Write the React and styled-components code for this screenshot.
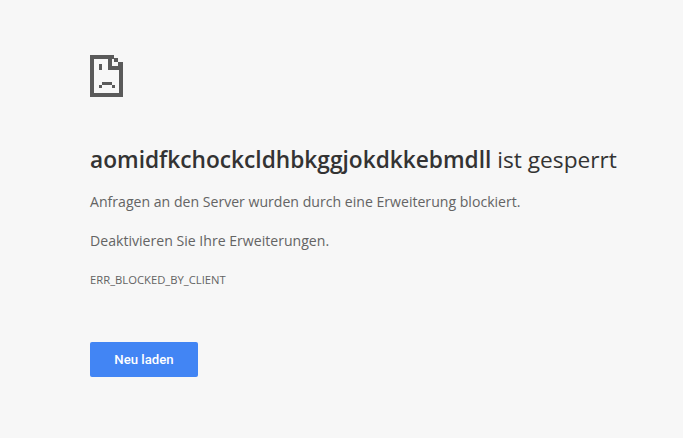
import React from "react"
import styled, { createGlobalStyle } from "styled-components"

const GlobalStyle = createGlobalStyle`
  html, body {
    margin: 0;
    height: 100%;
    background: #f7f7f7;
  }
`

const Page = styled("div")`
  box-sizing: border-box;
  height: 438px;
  padding: 55px 0 0 90px;
  font-family: "Open Sans", "Noto Sans", sans-serif;
  color: #646464;
  overflow: hidden;
`

const Icon = styled("svg")`
  display: block;
  width: 33px;
  height: 42px;
`

const Title = styled("h1")`
  margin: 48px 0 0;
  font-size: 22.7px;
  line-height: 30px;
  font-weight: 400;
  color: #333333;
  white-space: nowrap;
`

const Host = styled("strong")`
  font-weight: 600;
`

const Message = styled("p")`
  margin: ${({ $top }) => $top}px 0 0;
  font-size: 14.1px;
  line-height: 20px;
  white-space: nowrap;
`

const Code = styled("div")`
  margin-top: 21px;
  font-size: 11.25px;
  line-height: 16px;
  text-transform: uppercase;
`

const ReloadButton = styled("button")`
  display: block;
  width: 108px;
  height: 35px;
  margin-top: 54px;
  padding: 0;
  border: 0;
  border-radius: 2px;
  background: #4285f4;
  color: #ffffff;
  font-family: Roboto, sans-serif;
  font-size: 13.2px;
  font-weight: 500;
`

const SadPage = () => (
  <Icon viewBox="0 0 33 42" shapeRendering="crispEdges" fill="#5a5a5a">
    <path d="M0 0h24v4H4v34h25V15h4v27H0z" />
    <path d="M18 4h4v7h11v4H18zM24 3h4v4h-4zM28 7h5v4h-5z" />
    <path d="M9 9h3v6H9zM9 30h3v3H9zM12 27h10v3H12zM22 30h3v3h-3z" />
  </Icon>
)

export default function App() {
  return (
    <Page>
      <GlobalStyle />
      <SadPage />
      <Title>
        <Host>aomidfkchockcldhbkggjokdkkebmdll</Host> ist gesperrt
      </Title>
      <Message $top={17}>Anfragen an den Server wurden durch eine Erweiterung blockiert.</Message>
      <Message $top={19}>Deaktivieren Sie Ihre Erweiterungen.</Message>
      <Code>ERR_BLOCKED_BY_CLIENT</Code>
      <ReloadButton>Neu laden</ReloadButton>
    </Page>
  )
}
